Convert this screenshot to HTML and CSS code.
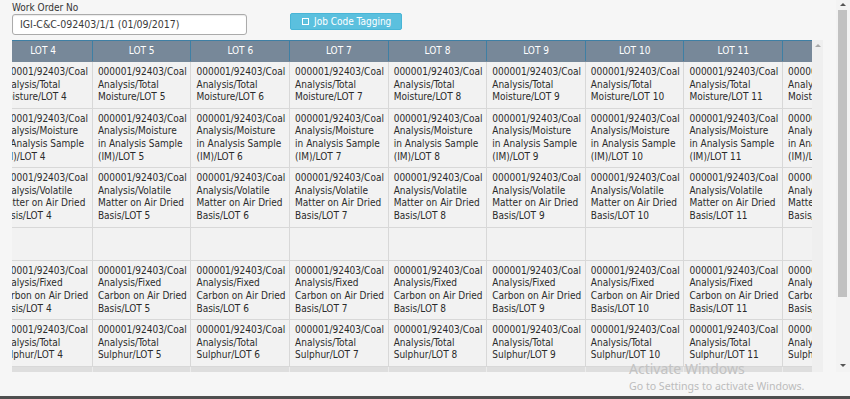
FILE: index.html
```html
<!DOCTYPE html>
<html lang="en">
<head>
<meta charset="utf-8">
<title>Job Code Tagging</title>
<link rel="stylesheet" href="styles.css">
</head>
<body>
<div class="window">
  <div class="page">
    <div class="content">
      <div class="toolbar">
        <div class="field">
          <div class="field-label">Work Order No</div>
          <div class="input">IGI-C&amp;C-092403/1/1 (01/09/2017)</div>
        </div>
        <button class="btn-info" type="button"><span class="sq"></span>Job Code Tagging</button>
      </div>
      <div class="grid-box">
        <div class="viewport">
          <table class="grid">
            <thead>
              <tr>
                <th>LOT 4</th><th>LOT 5</th><th>LOT 6</th><th>LOT 7</th><th>LOT 8</th><th>LOT 9</th><th>LOT 10</th><th>LOT 11</th><th>LOT 12</th>
              </tr>
            </thead>
            <tbody>
              <tr>
                <td>000001/92403/Coal<br>Analysis/Total<br>Moisture/LOT 4</td>
                <td>000001/92403/Coal<br>Analysis/Total<br>Moisture/LOT 5</td>
                <td>000001/92403/Coal<br>Analysis/Total<br>Moisture/LOT 6</td>
                <td>000001/92403/Coal<br>Analysis/Total<br>Moisture/LOT 7</td>
                <td>000001/92403/Coal<br>Analysis/Total<br>Moisture/LOT 8</td>
                <td>000001/92403/Coal<br>Analysis/Total<br>Moisture/LOT 9</td>
                <td>000001/92403/Coal<br>Analysis/Total<br>Moisture/LOT 10</td>
                <td>000001/92403/Coal<br>Analysis/Total<br>Moisture/LOT 11</td>
                <td>000001/92403/Coal<br>Analysis/Total<br>Moisture/LOT 12</td>
              </tr>
              <tr>
                <td>000001/92403/Coal<br>Analysis/Moisture<br>in Analysis Sample<br>(IM)/LOT 4</td>
                <td>000001/92403/Coal<br>Analysis/Moisture<br>in Analysis Sample<br>(IM)/LOT 5</td>
                <td>000001/92403/Coal<br>Analysis/Moisture<br>in Analysis Sample<br>(IM)/LOT 6</td>
                <td>000001/92403/Coal<br>Analysis/Moisture<br>in Analysis Sample<br>(IM)/LOT 7</td>
                <td>000001/92403/Coal<br>Analysis/Moisture<br>in Analysis Sample<br>(IM)/LOT 8</td>
                <td>000001/92403/Coal<br>Analysis/Moisture<br>in Analysis Sample<br>(IM)/LOT 9</td>
                <td>000001/92403/Coal<br>Analysis/Moisture<br>in Analysis Sample<br>(IM)/LOT 10</td>
                <td>000001/92403/Coal<br>Analysis/Moisture<br>in Analysis Sample<br>(IM)/LOT 11</td>
                <td>000001/92403/Coal<br>Analysis/Moisture<br>in Analysis Sample<br>(IM)/LOT 12</td>
              </tr>
              <tr>
                <td>000001/92403/Coal<br>Analysis/Volatile<br>Matter on Air Dried<br>Basis/LOT 4</td>
                <td>000001/92403/Coal<br>Analysis/Volatile<br>Matter on Air Dried<br>Basis/LOT 5</td>
                <td>000001/92403/Coal<br>Analysis/Volatile<br>Matter on Air Dried<br>Basis/LOT 6</td>
                <td>000001/92403/Coal<br>Analysis/Volatile<br>Matter on Air Dried<br>Basis/LOT 7</td>
                <td>000001/92403/Coal<br>Analysis/Volatile<br>Matter on Air Dried<br>Basis/LOT 8</td>
                <td>000001/92403/Coal<br>Analysis/Volatile<br>Matter on Air Dried<br>Basis/LOT 9</td>
                <td>000001/92403/Coal<br>Analysis/Volatile<br>Matter on Air Dried<br>Basis/LOT 10</td>
                <td>000001/92403/Coal<br>Analysis/Volatile<br>Matter on Air Dried<br>Basis/LOT 11</td>
                <td>000001/92403/Coal<br>Analysis/Volatile<br>Matter on Air Dried<br>Basis/LOT 12</td>
              </tr>
              <tr class="empty-row">
                <td><div class="blank"></div></td><td><div class="blank"></div></td><td><div class="blank"></div></td>
                <td><div class="blank"></div></td><td><div class="blank"></div></td><td><div class="blank"></div></td>
                <td><div class="blank"></div></td><td><div class="blank"></div></td><td><div class="blank"></div></td>
              </tr>
              <tr>
                <td>000001/92403/Coal<br>Analysis/Fixed<br>Carbon on Air Dried<br>Basis/LOT 4</td>
                <td>000001/92403/Coal<br>Analysis/Fixed<br>Carbon on Air Dried<br>Basis/LOT 5</td>
                <td>000001/92403/Coal<br>Analysis/Fixed<br>Carbon on Air Dried<br>Basis/LOT 6</td>
                <td>000001/92403/Coal<br>Analysis/Fixed<br>Carbon on Air Dried<br>Basis/LOT 7</td>
                <td>000001/92403/Coal<br>Analysis/Fixed<br>Carbon on Air Dried<br>Basis/LOT 8</td>
                <td>000001/92403/Coal<br>Analysis/Fixed<br>Carbon on Air Dried<br>Basis/LOT 9</td>
                <td>000001/92403/Coal<br>Analysis/Fixed<br>Carbon on Air Dried<br>Basis/LOT 10</td>
                <td>000001/92403/Coal<br>Analysis/Fixed<br>Carbon on Air Dried<br>Basis/LOT 11</td>
                <td>000001/92403/Coal<br>Analysis/Fixed<br>Carbon on Air Dried<br>Basis/LOT 12</td>
              </tr>
              <tr>
                <td>000001/92403/Coal<br>Analysis/Total<br>Sulphur/LOT 4</td>
                <td>000001/92403/Coal<br>Analysis/Total<br>Sulphur/LOT 5</td>
                <td>000001/92403/Coal<br>Analysis/Total<br>Sulphur/LOT 6</td>
                <td>000001/92403/Coal<br>Analysis/Total<br>Sulphur/LOT 7</td>
                <td>000001/92403/Coal<br>Analysis/Total<br>Sulphur/LOT 8</td>
                <td>000001/92403/Coal<br>Analysis/Total<br>Sulphur/LOT 9</td>
                <td>000001/92403/Coal<br>Analysis/Total<br>Sulphur/LOT 10</td>
                <td>000001/92403/Coal<br>Analysis/Total<br>Sulphur/LOT 11</td>
                <td>000001/92403/Coal<br>Analysis/Total<br>Sulphur/LOT 12</td>
              </tr>
              <tr class="foot-row">
                <td></td><td></td><td></td><td></td><td></td><td></td><td></td><td></td><td></td>
              </tr>
            </tbody>
          </table>
        </div>
        <div class="vscroll-inner"><span class="arrow-up light"></span></div>
      </div>
    </div>
    <div class="vscroll-outer">
      <span class="arrow-up"></span>
      <div class="thumb"></div>
      <div class="track"></div>
      <span class="arrow-down"></span>
    </div>
  </div>
  <div class="watermark">
    <div class="wm-title">Activate Windows</div>
    <div class="wm-sub">Go to Settings to activate Windows.</div>
  </div>
</div>
</body>
</html>
```

FILE: styles.css
```css
* { box-sizing: border-box; }

html, body {
  margin: 0;
  padding: 0;
}

body {
  width: 850px;
  height: 399px;
  overflow: hidden;
  background: #f6f6f6;
  font-family: "DejaVu Sans Condensed", "DejaVu Sans", sans-serif;
  font-stretch: condensed;
  font-size: 10px;
  color: #333;
}

.window {
  position: relative;
  height: 399px;
  border-bottom: 3px solid #4f4f4f;
}

.page {
  display: flex;
  height: 372px;
}

.content {
  flex: 1;
  padding: 2px 0 0 12px;
}

.toolbar {
  display: flex;
  align-items: flex-start;
}

.field {
  width: 235px;
}

.field-label {
  line-height: 12px;
  font-size: 10px;
  color: #333;
}

.input {
  height: 21px;
  border: 1px solid #ababab;
  border-radius: 3px;
  background: #fff;
  box-shadow: inset 0 1px 1px rgba(0, 0, 0, 0.08);
  padding: 0 7px;
  font-size: 10.5px;
  line-height: 19px;
  color: #3a3a3a;
  white-space: nowrap;
}

.btn-info {
  margin: 11px 0 0 43px;
  width: 112px;
  height: 17px;
  padding: 0 0 0 11px;
  display: flex;
  align-items: center;
  gap: 5px;
  background: #5bc0de;
  border: 1px solid #48b5d6;
  border-radius: 2px;
  color: #fff;
  font-family: inherit;
  font-stretch: condensed;
  font-size: 10px;
  line-height: 12px;
  cursor: pointer;
}

.sq {
  width: 7px;
  height: 7px;
  border: 1px solid #fff;
  flex: none;
}

.grid-box {
  display: flex;
  margin-top: 5px;
  width: 811px;
  height: 332px;
}

.viewport {
  width: 800px;
  height: 332px;
  overflow: hidden;
}

.grid {
  margin-left: -18.71px;
  width: 888.43px;
  table-layout: fixed;
  border-collapse: collapse;
}

.grid th {
  background: #778899;
  color: #fff;
  font-weight: normal;
  font-size: 10px;
  line-height: 12px;
  padding: 4px 5px;
  text-align: center;
  border-top: 1px solid #3e7fa4;
  border-left: 1px solid #3e7fa4;
  border-right: 1px solid #3e7fa4;
  border-bottom: 1px solid #778899;
  white-space: nowrap;
}

.grid td {
  background: #f2f2f2;
  color: #2b2b2b;
  font-size: 10px;
  line-height: 12.6px;
  padding: 4px 5px;
  border: 1px solid #d8d8d8;
  vertical-align: top;
  white-space: nowrap;
}

.blank {
  height: 24.3px;
}

.foot-row td {
  background: #dedede;
  border-left-color: #ececec;
  border-right-color: #ececec;
  height: 30px;
}

.vscroll-inner {
  width: 11px;
  height: 332px;
  background: #efefef;
  display: flex;
  justify-content: center;
  padding-top: 4px;
}

.vscroll-outer {
  width: 14px;
  height: 372px;
  margin-left: 13px;
  background: #f3f3f3;
  display: flex;
  flex-direction: column;
  align-items: center;
  padding: 3px 1px 5px 0;
}

.arrow-up,
.arrow-down {
  width: 0;
  height: 0;
  border-left: 3px solid transparent;
  border-right: 3px solid transparent;
  flex: none;
}

.arrow-up {
  border-bottom: 3px solid #555;
}

.arrow-up.light {
  border-bottom-color: #a8a8a8;
}

.arrow-down {
  border-top: 3px solid #555;
}

.thumb {
  width: 9px;
  height: 287px;
  margin-top: 4px;
  background: #c1c1c1;
  flex: none;
}

.track {
  flex: 1;
}

.watermark {
  position: absolute;
  left: 629px;
  top: 360px;
  font-family: "Noto Sans", "Open Sans", sans-serif;
  font-stretch: normal;
  color: #c2c2c2;
}

.wm-title {
  font-size: 14px;
  line-height: 18px;
}

.wm-sub {
  margin-top: 1px;
  font-size: 10.6px;
  line-height: 14px;
  color: #bcbcbc;
}
```
